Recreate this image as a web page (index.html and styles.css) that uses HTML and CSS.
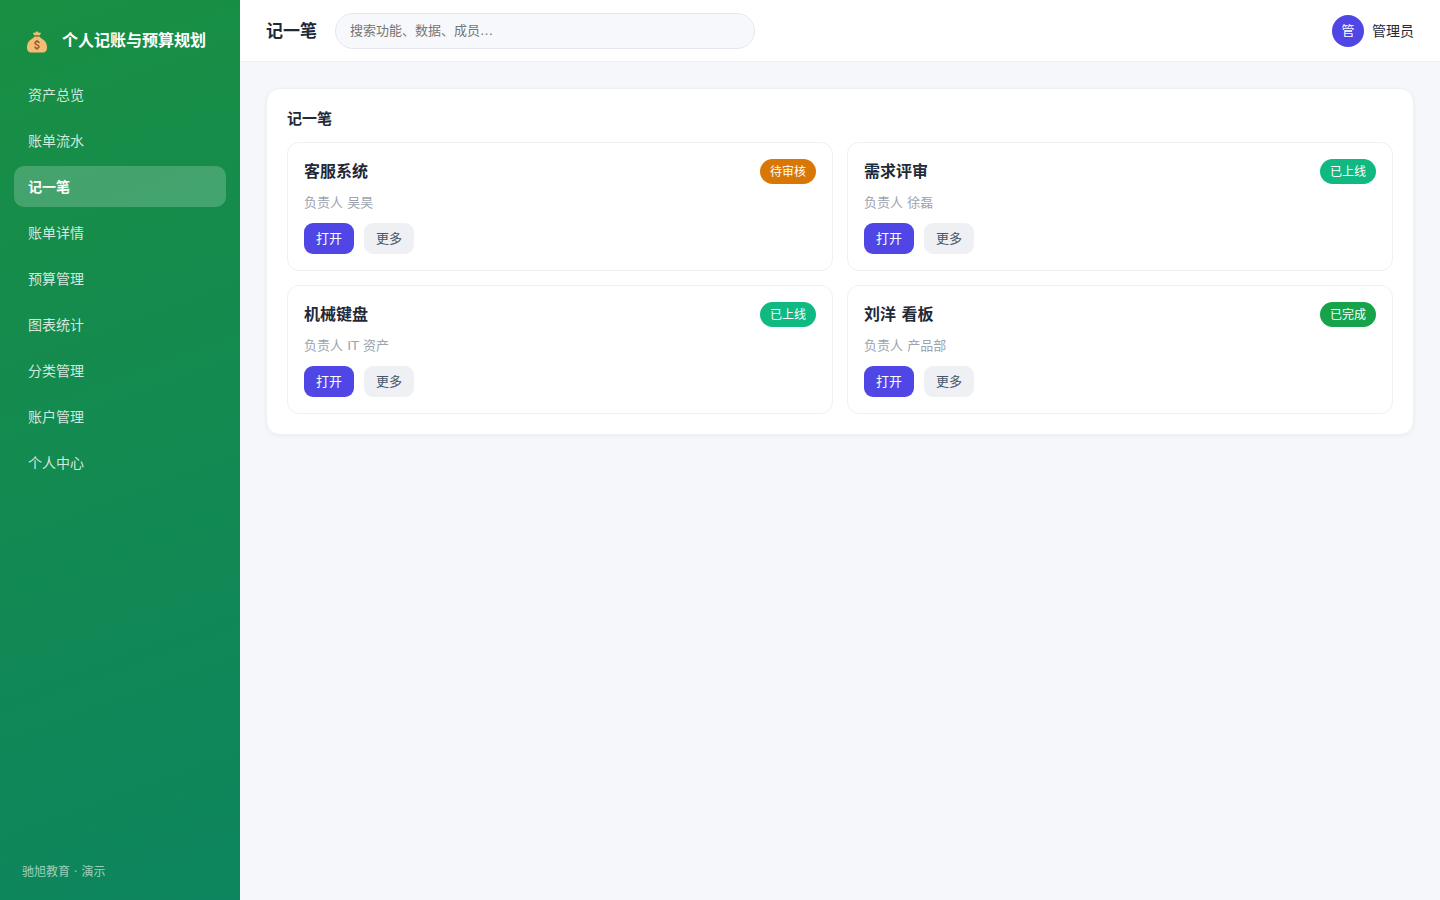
FILE: index.html
```html
<!DOCTYPE html>
<html lang="zh-CN">
<head>
    <meta charset="utf-8">
    <meta name="viewport" content="width=device-width, initial-scale=1">
    <title>个人记账与预算规划</title>
    <link rel="stylesheet" href="styles.css">
</head>
<body>
    <div class="app">
        <aside class="sidebar">
            <div class="brand">
                <svg class="brand-icon" viewBox="0 0 20 22" aria-hidden="true">
                    <path fill="#f5bd72" d="M7.5 4.5 6 2.6l.8-1.2 1.7.3L9.3.4h1.4l.8 1.3 1.7-.3.8 1.2-1.5 1.9z"/>
                    <path fill="#f5bd72" d="M7.500 5.500h5c.7 1.700 2.500 2 4.500 3.800 2.200 2 3 4.500 3 7 0 3.800-1.500 5.200-4.500 5.200h-11c-3 0-4.500-1.400-4.500-5.200 0-2.500.8-5 3-7 2-1.800 3.800-2.100 4.500-3.800z"/>
                    <path fill="#a8643c" d="M7.500 4.200h5v1h-5z"/>
                    <path fill="none" stroke="#98593c" stroke-width="1.500" d="M12 12.200c0-1.200-.8-1.700-2-1.700s-2 .6-2 1.600c0 2.200 4 1.300 4 3.500 0 1.100-.8 1.700-2 1.700s-2-.6-2-1.800M10 9v1.500M10 17.200v1.500"/>
                </svg>
                <span>个人记账与预算规划</span>
            </div>
            <nav class="nav">
                <a href="#">资产总览</a>
                <a href="#">账单流水</a>
                <a href="#" class="active">记一笔</a>
                <a href="#">账单详情</a>
                <a href="#">预算管理</a>
                <a href="#">图表统计</a>
                <a href="#">分类管理</a>
                <a href="#">账户管理</a>
                <a href="#">个人中心</a>
            </nav>
            <div class="side-foot">驰旭教育 · 演示</div>
        </aside>

        <div class="main">
            <header class="topbar">
                <h1>记一笔</h1>
                <input class="search" type="search" placeholder="搜索功能、数据、成员…" aria-label="搜索">
                <div class="user">
                    <span class="avatar">管</span>
                    <span>管理员</span>
                </div>
            </header>

            <main class="content">
                <section class="panel">
                    <h2>记一笔</h2>
                    <div class="grid">
                        <article class="item">
                            <div class="item-head">
                                <h3>客服系统</h3>
                                <span class="badge badge-warn">待审核</span>
                            </div>
                            <p>负责人 吴昊</p>
                            <div class="actions">
                                <button type="button" class="btn btn-primary">打开</button>
                                <button type="button" class="btn">更多</button>
                            </div>
                        </article>
                        <article class="item">
                            <div class="item-head">
                                <h3>需求评审</h3>
                                <span class="badge badge-online">已上线</span>
                            </div>
                            <p>负责人 徐磊</p>
                            <div class="actions">
                                <button type="button" class="btn btn-primary">打开</button>
                                <button type="button" class="btn">更多</button>
                            </div>
                        </article>
                        <article class="item">
                            <div class="item-head">
                                <h3>机械键盘</h3>
                                <span class="badge badge-online">已上线</span>
                            </div>
                            <p>负责人 IT 资产</p>
                            <div class="actions">
                                <button type="button" class="btn btn-primary">打开</button>
                                <button type="button" class="btn">更多</button>
                            </div>
                        </article>
                        <article class="item">
                            <div class="item-head">
                                <h3>刘洋 看板</h3>
                                <span class="badge badge-done">已完成</span>
                            </div>
                            <p>负责人 产品部</p>
                            <div class="actions">
                                <button type="button" class="btn btn-primary">打开</button>
                                <button type="button" class="btn">更多</button>
                            </div>
                        </article>
                    </div>
                </section>
            </main>
        </div>
    </div>
</body>
</html>
```
FILE: styles.css
```css
* {
    box-sizing: border-box;
}
body {
    margin: 0;
    background: #f5f7fb;
    color: #1f2937;
    font-family: "DejaVu Sans", "Noto Sans CJK SC", sans-serif;
    font-size: 14px;
    line-height: 21px;
}
h1, h2, h3, p {
    margin: 0;
}
.app {
    display: flex;
    min-height: 100vh;
}

/* 侧边栏 */
.sidebar {
    display: flex;
    flex-direction: column;
    flex: 0 0 240px;
    padding: 20px 14px 19px;
    background: linear-gradient(160deg, #198f43, #0d855e);
    color: #fff;
}
.brand {
    display: flex;
    align-items: center;
    gap: 15px;
    height: 40px;
    margin-bottom: 14px;
    padding-left: 13px;
    font-size: 16px;
    font-weight: 700;
    white-space: nowrap;
}
.brand-icon {
    width: 20px;
    height: 22px;
    margin-top: 4px;
}
.nav {
    display: flex;
    flex-direction: column;
    gap: 5px;
}
.nav a {
    padding: 11px 14px 9px;
    border-radius: 10px;
    color: rgba(255, 255, 255, 0.82);
    text-decoration: none;
}
.nav a.active {
    background: rgba(255, 255, 255, 0.2);
    color: #fff;
    font-weight: 700;
}
.side-foot {
    margin-top: auto;
    padding-left: 8px;
    font-size: 12px;
    line-height: 18px;
    color: rgba(255, 255, 255, 0.6);
}

/* 顶栏 */
.main {
    flex: 1;
    min-width: 0;
}
.topbar {
    display: flex;
    align-items: center;
    gap: 18px;
    height: 62px;
    padding: 0 26px;
    background: #fff;
    border-bottom: 1px solid #eef0f4;
    line-height: 22px;
}
.topbar h1 {
    font-size: 17px;
    white-space: nowrap;
}
.search {
    flex: 0 1 420px;
    min-width: 0;
    height: 36px;
    padding: 0 14px;
    border: 1px solid #e5e7f0;
    border-radius: 18px;
    background: #f7f8fc;
    color: inherit;
    font: inherit;
    font-size: 13px;
    appearance: none;
}
.search::placeholder {
    color: #757575;
}
.user {
    display: flex;
    align-items: center;
    gap: 8px;
    margin-left: auto;
    white-space: nowrap;
}
.avatar {
    width: 32px;
    height: 32px;
    border-radius: 50%;
    background: #4f46e5;
    color: #fff;
    font-size: 13px;
    line-height: 32px;
    text-align: center;
}

/* 内容 */
.content {
    padding: 26px;
}
.panel {
    padding: 20px;
    border: 1px solid #eef0f4;
    border-radius: 14px;
    background: #fff;
    box-shadow: 0 1px 4px rgba(30, 41, 90, 0.05);
}
.panel h2 {
    margin-bottom: 13px;
    font-size: 15px;
    line-height: 20px;
}
.grid {
    display: grid;
    grid-template-columns: 1fr 1fr;
    gap: 14px;
}
.item {
    padding: 16px;
    border: 1px solid #eef0f4;
    border-radius: 12px;
}
.item-head {
    display: flex;
    align-items: center;
    justify-content: space-between;
}
.item h3 {
    font-size: 16px;
}
.badge {
    padding: 3px 10px 1px;
    border-radius: 13px;
    color: #fff;
    font-size: 12px;
}
.badge-warn {
    background: #d97706;
}
.badge-online {
    background: #10b981;
}
.badge-done {
    background: #16a34a;
}
.item p {
    margin: 8px 0 10px;
    color: #9ca3af;
    font-size: 13px;
}
.actions {
    display: flex;
    gap: 10px;
}
.btn {
    padding: 5px 12px;
    border: 0;
    border-radius: 9px;
    background: #eef0f4;
    color: #475569;
    font: inherit;
    font-size: 13px;
    cursor: pointer;
}
.btn-primary {
    background: #4f46e5;
    color: #fff;
}
```
